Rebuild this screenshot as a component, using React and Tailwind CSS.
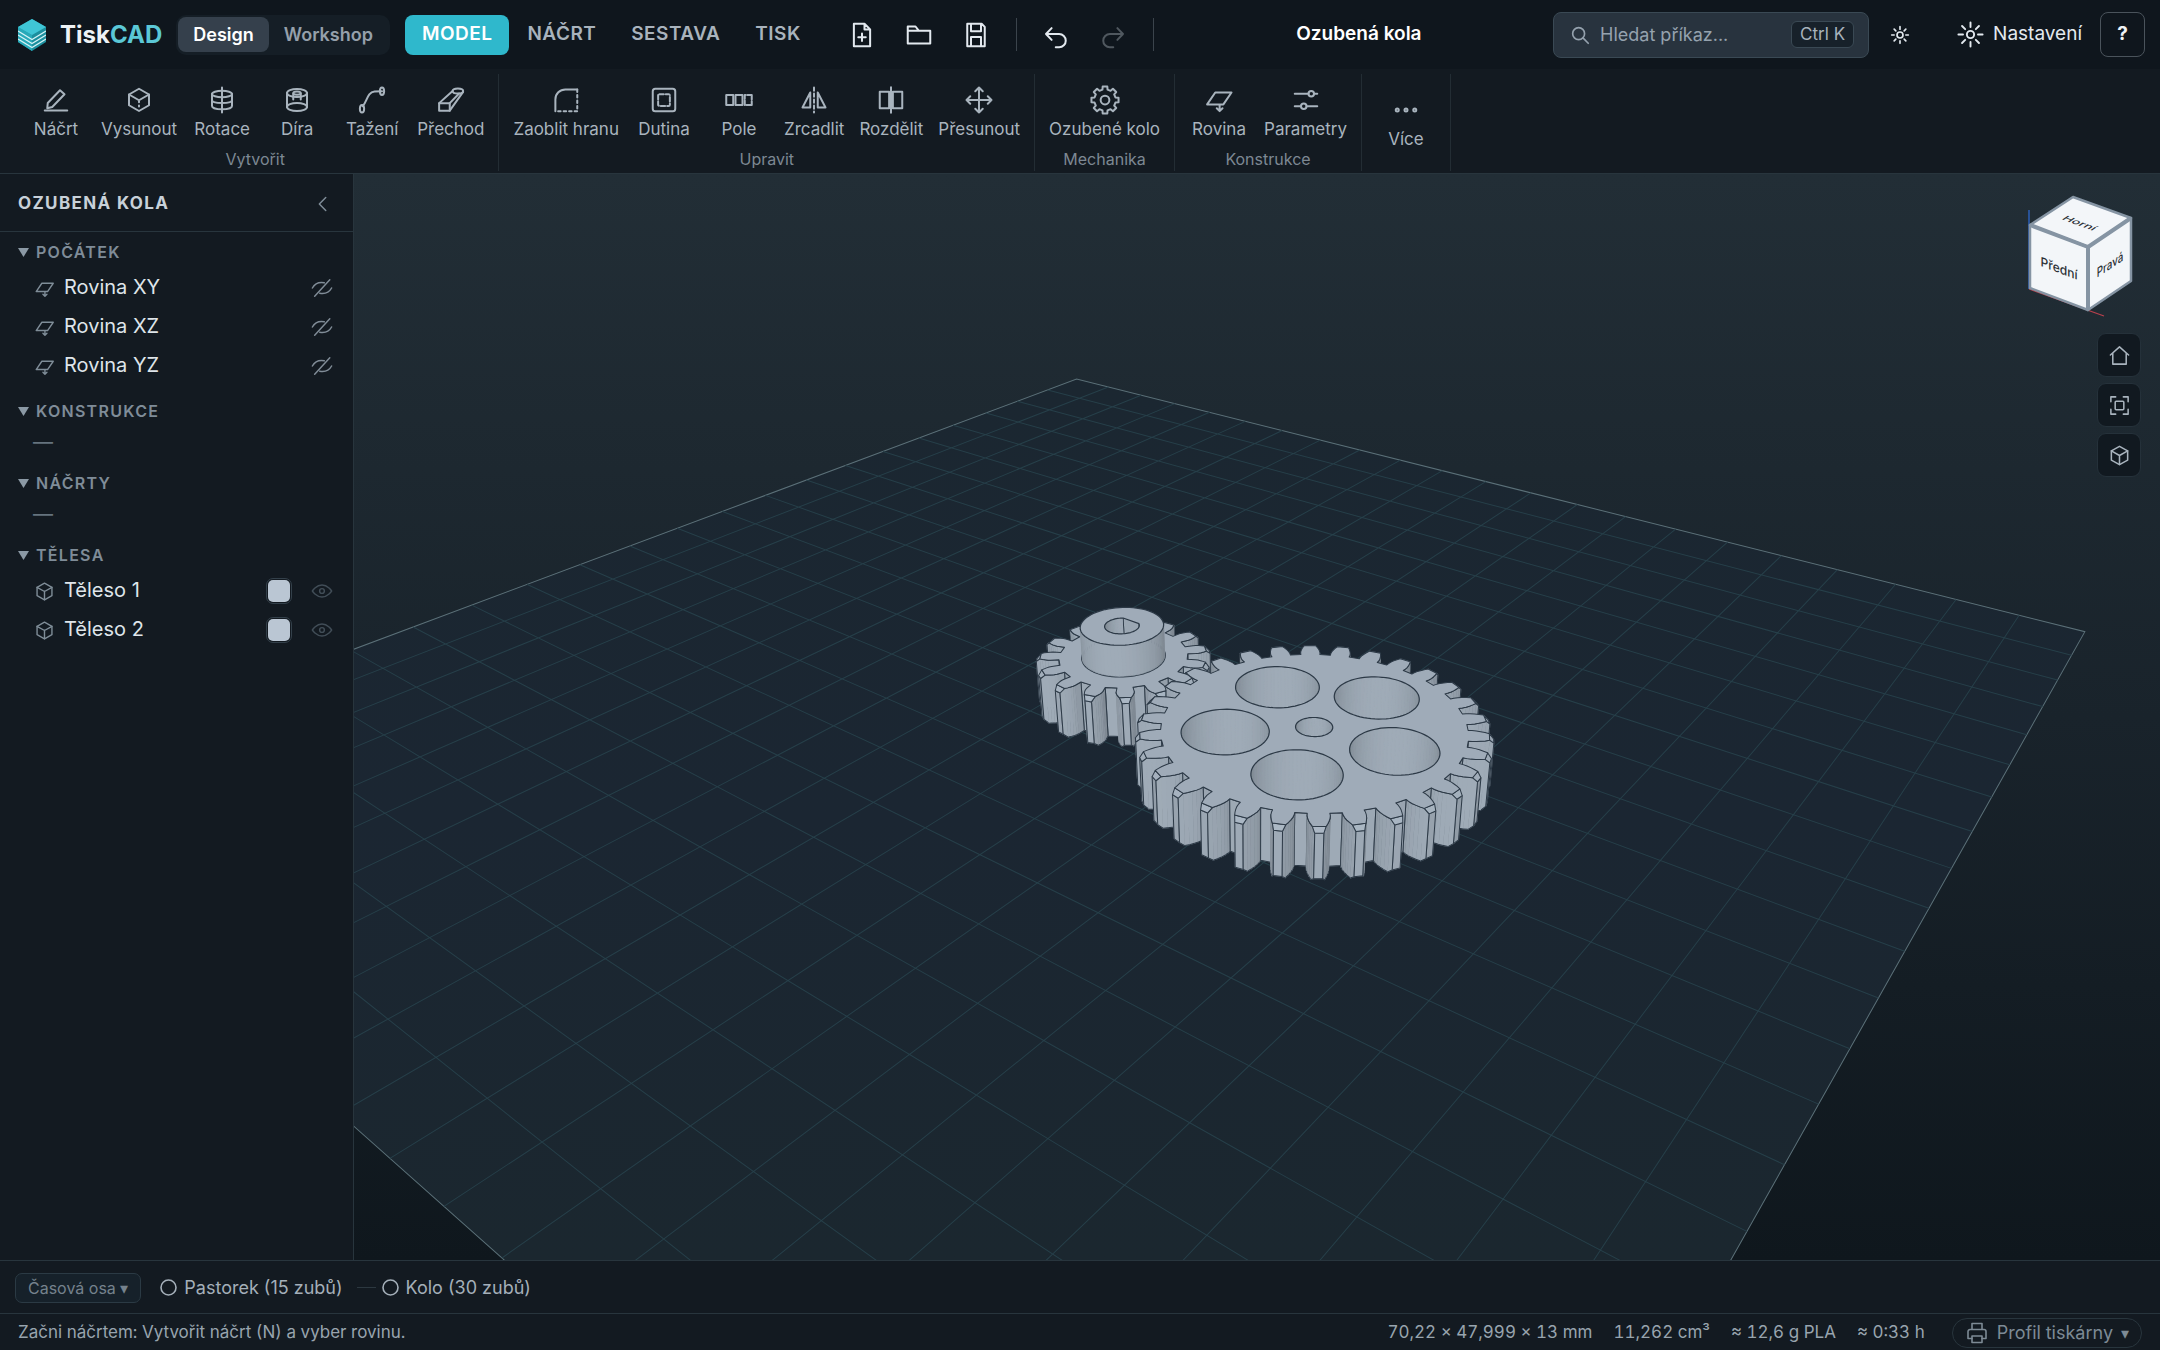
import { useState } from 'react'

/* ---------- 3D scene ---------- */

const VIEW_W = 1805
const VIEW_H = 1086
const FOCAL = VIEW_H / 2 / Math.tan(Math.PI / 9)
const CAM_DIST = 206
const TARGET = [24.5, -0.4, 6.5]
const AZ = Math.asin(0.593)
const EL = (30.6 * Math.PI) / 180

const DIR = [Math.sin(AZ) * Math.cos(EL), -Math.cos(AZ) * Math.cos(EL), Math.sin(EL)]
const RIGHT = [Math.cos(AZ), Math.sin(AZ), 0]
const UP = [-Math.sin(AZ) * Math.sin(EL), Math.cos(AZ) * Math.sin(EL), Math.cos(EL)]
const EYE = TARGET.map((t, i) => t + DIR[i] * CAM_DIST)

const dot = (a, b) => a[0] * b[0] + a[1] * b[1] + a[2] * b[2]
const norm = (v) => {
  const l = Math.hypot(...v)
  return v.map((c) => c / l)
}
const LIGHT = norm(DIR.map((d, i) => d - 0.1 * RIGHT[i] + 0.25 * UP[i]))

const project = (p) => {
  const rel = p.map((c, i) => c - TARGET[i])
  const depth = CAM_DIST - dot(DIR, rel)
  return [VIEW_W / 2 + (FOCAL * dot(RIGHT, rel)) / depth, VIEW_H / 2 - (FOCAL * dot(UP, rel)) / depth, depth]
}

const toPath = (pts, close = true) =>
  'M' + pts.map((p) => project(p).slice(0, 2).map((c) => c.toFixed(1)).join(' ')).join('L') + (close ? 'Z' : '')

const shade = (n) => {
  const k = 0.74 + 0.26 * Math.max(0, dot(norm(n), LIGHT))
  return `rgb(${[172, 185, 198].map((c) => Math.round(c * k)).join(',')})`
}
const facing = (n, p) => dot(n, EYE.map((c, i) => c - p[i])) > 0

const circle = (cx, cy, r, n = 72) =>
  Array.from({ length: n }, (_, i) => {
    const a = (i / n) * 2 * Math.PI
    return { x: cx + r * Math.cos(a), y: cy + r * Math.sin(a) }
  })

const MODULE = 1.5
const HEIGHT = 8
const CHAMFER = 0.6
const PRESSURE = (20 * Math.PI) / 180
const inv = (a) => Math.tan(a) - a

// Closed counter-clockwise outline of an involute spur gear
function gearOutline(teeth, cx, phase) {
  const rp = (MODULE * teeth) / 2
  const ra = rp + MODULE
  const rf = rp - 1.25 * MODULE
  const rb = rp * Math.cos(PRESSURE)
  const half = (r) => Math.PI / (2 * teeth) + inv(PRESSURE) - inv(Math.acos(Math.min(1, rb / Math.max(r, rb))))
  const start = Math.max(rf, rb)
  const radii = [rf]
  for (let i = rf < rb ? 0 : 1; i <= 4; i++) radii.push(start + ((ra - CHAMFER - start) * i) / 4)
  radii.push(ra)
  const pts = []
  const tips = []
  for (let k = 0; k < teeth; k++) {
    const c = phase + (k * 2 * Math.PI) / teeth
    const at = (r, s) => {
      const a = c + s * half(r)
      const tip = r === ra
      return { x: cx + r * Math.cos(a), y: r * Math.sin(a), cut: tip ? CHAMFER : 0, tip, edge: tip || r === rf }
    }
    radii.forEach((r) => pts.push(at(r, -1)))
    ;[...radii].reverse().forEach((r) => pts.push(at(r, 1)))
    tips.push({ c, quad: [at(ra - CHAMFER, -1), at(ra - CHAMFER, 1), at(ra, 1), at(ra, -1)] })
  }
  return { pts, tips }
}

// Visible walls of an extruded outline, inner = true for a hole
function walls(pts, z0, z1, inner = false) {
  const out = []
  pts.forEach((a, i) => {
    const b = pts[(i + 1) % pts.length]
    const s = inner ? -1 : 1
    const n = [s * (b.y - a.y), -s * (b.x - a.x), 0]
    if (!facing(n, [a.x, a.y, z0])) return
    const la = [a.x, a.y, z0 + (a.cut || 0)]
    const lb = [b.x, b.y, z0 + (b.cut || 0)]
    const ha = [a.x, a.y, z1 - (a.cut || 0)]
    const hb = [b.x, b.y, z1 - (b.cut || 0)]
    let lines = ''
    if (!inner) lines += toPath([la, lb], false) + toPath([ha, hb], false)
    if (a.edge) lines += toPath([la, ha], false)
    if (b.edge) lines += toPath([lb, hb], false)
    out.push({ d: toPath([la, lb, hb, ha]), fill: shade(n), lines, depth: project([(a.x + b.x) / 2, (a.y + b.y) / 2, z0])[2] })
  })
  return out
}

const EDGE = '#2c3946'
const TOP_FILL = '#9fabb8'

function Facets({ faces }) {
  return faces.map((f, i) => (
    <g key={i}>
      <path d={f.d} fill={f.fill} stroke={f.fill} strokeWidth={0.6} />
      {f.lines && <path d={f.lines} fill="none" stroke={EDGE} strokeWidth={1} strokeLinecap="round" />}
    </g>
  ))
}

function Hole({ id, pts, z0, z1 }) {
  const d = toPath(pts.map((p) => [p.x, p.y, z1]))
  return (
    <g>
      <clipPath id={id}>
        <path d={d} />
      </clipPath>
      <g clipPath={`url(#${id})`}>
        <path d={d} fill={TOP_FILL} />
        <Facets faces={walls(pts, z0, z1, true)} />
      </g>
      <path d={d} fill="none" stroke={EDGE} strokeWidth={1.2} />
    </g>
  )
}

function Gears() {
  const wheelX = (MODULE * (15 + 30)) / 2
  const phase = Math.PI / 30
  const pinion = gearOutline(15, 0, 0)
  const wheel = gearOutline(30, wheelX, phase)
  const all = [pinion, wheel]

  const sides = all.flatMap((g) => [
    ...walls(g.pts, 0, HEIGHT),
    ...g.tips.map(({ c, quad }) => {
      const q = quad.map((p) => [p.x, p.y, HEIGHT - p.cut])
      const d = toPath(q)
      return { d, fill: shade([Math.cos(c), Math.sin(c), 1.6]), lines: d, depth: project(q[2])[2] - 0.5 }
    }),
  ])
  sides.sort((a, b) => b.depth - a.depth)

  // D-shaped bore with its flat towards the back
  const hub = circle(0, 0, 6)
  const flat = 2
  const flatX = Math.sqrt(2.5 * 2.5 - flat * flat)
  const bore = circle(0, 0, 2.5).filter((p) => p.y < flat)
  const cut = bore.findIndex((p) => p.x < 0 && p.y > 0)
  bore.splice(cut, 0, { x: flatX, y: flat, edge: true }, { x: -flatX, y: flat, edge: true })

  return (
    <g strokeLinejoin="round">
      <Facets faces={sides} />
      {all.map((g, i) => (
        <path key={i} d={toPath(g.pts.filter((p) => !p.tip).map((p) => [p.x, p.y, HEIGHT]))} fill={TOP_FILL} stroke={EDGE} strokeWidth={1} />
      ))}
      {[0, 1, 2, 3, 4].map((i) => {
        const a = phase + (i * 2 * Math.PI) / 5
        return <Hole key={i} id={`web-${i}`} pts={circle(wheelX + 12 * Math.cos(a), 12 * Math.sin(a), 5.9)} z0={0} z1={HEIGHT} />
      })}
      <Hole id="wheel-bore" pts={circle(wheelX, 0, 2.5)} z0={0} z1={HEIGHT} />
      <path d={toPath(hub.map((p) => [p.x, p.y, HEIGHT]))} fill={TOP_FILL} stroke={EDGE} strokeWidth={2.4} />
      <Facets faces={walls(hub, HEIGHT, 13).map((f) => ({ ...f, lines: '' }))} />
      <path d={toPath(hub.map((p) => [p.x, p.y, 13]))} fill={TOP_FILL} stroke={EDGE} strokeWidth={1.2} />
      <Hole id="hub-bore" pts={bore} z0={0} z1={13} />
    </g>
  )
}

function Scene() {
  const lines = []
  for (let i = -100; i <= 100; i += 10) {
    lines.push(toPath([[i, -110, 0], [i, 110, 0]], false), toPath([[-110, i, 0], [110, i, 0]], false))
  }
  return (
    <svg className="absolute inset-0 h-full w-full" viewBox={`0 0 ${VIEW_W} ${VIEW_H}`} preserveAspectRatio="xMidYMid slice" aria-hidden="true">
      <defs>
        <linearGradient id="bed" gradientUnits="userSpaceOnUse" x1="0" y1="200" x2="0" y2="1086">
          <stop offset="0" stopColor="#1b2731" />
          <stop offset="0.5" stopColor="#1b2632" />
          <stop offset="1" stopColor="#1b272f" />
        </linearGradient>
      </defs>
      <path d={toPath([[-110, -110, 0], [110, -110, 0], [110, 110, 0], [-110, 110, 0]])} fill="url(#bed)" stroke="#5b7078" strokeWidth={1} />
      <path d={lines.join('')} fill="none" stroke="#263f49" strokeWidth={1} />
      <Gears />
    </svg>
  )
}

/* ---------- icons ---------- */

function Icon({ children, className = 'size-[30px]', stroke = 1.6 }) {
  return (
    <svg className={className} viewBox="0 0 24 24" fill="none" stroke="currentColor" strokeWidth={stroke} strokeLinecap="round" strokeLinejoin="round" aria-hidden="true">
      {children}
    </svg>
  )
}

const cogPath = (() => {
  const pts = []
  for (let i = 0; i < 8; i++) {
    const c = (i * Math.PI) / 4
    ;[[-0.24, 8.6], [-0.17, 11], [0.17, 11], [0.24, 8.6]].forEach(([o, r]) => {
      pts.push(`${(12 + r * Math.sin(c + o)).toFixed(2)} ${(12 - r * Math.cos(c + o)).toFixed(2)}`)
    })
  }
  return 'M' + pts.join('L') + 'Z'
})()

const icons = {
  sketch: <><path d="M5 18.6l.4-4.2L15.2 4.2l3.6 3.2L9 17.6z" /><path d="M3 20.4h18" /></>,
  extrude: <><path d="M12 3l8 4.6v8.6l-8 4.6-8-4.6V7.6z" /><path d="M4 7.6l8 4.6 8-4.6M12 12.2v1.6M12 16.4v.8" /></>,
  revolve: <><ellipse cx="12" cy="7.2" rx="8" ry="2.6" /><path d="M4 7.2v9.6c0 1.5 3.6 2.6 8 2.6s8-1.1 8-2.6V7.2M4 12c0 1.5 3.6 2.4 8 2.4s8-.9 8-2.4M12 2v20" /></>,
  hole: <><ellipse cx="12" cy="6.4" rx="8" ry="3.2" /><ellipse cx="12" cy="6.4" rx="3" ry="1.3" /><path d="M4 6.4v11.2M20 6.4v11.2M9 7v4.5M15 7v4.5" /><ellipse cx="12" cy="17.6" rx="8" ry="3.2" /></>,
  sweep: <><ellipse cx="4" cy="19" rx="1.7" ry="3" /><ellipse cx="20" cy="5" rx="1.7" ry="3" /><path d="M4.5 17C8 14 8 5.5 14 5.2L20 5" /></>,
  loft: <><rect x="2.5" y="14.5" width="8.5" height="6" /><ellipse cx="17.5" cy="4.8" rx="4.2" ry="2" /><path d="M2.5 14.5L13.3 4.8M11 14.5l7.5-7.7M11 20.5L21.7 5.5" /></>,
  fillet: <><path d="M3.5 21V11.5a8 8 0 018-8H21" /><path d="M21 3.5V21H3.5" strokeDasharray="2 2.4" /></>,
  shell: <><rect x="3" y="3" width="18" height="18" rx="2" /><rect x="7.3" y="7.3" width="9.4" height="9.4" rx="1" strokeDasharray="3.5 1.6" /></>,
  pattern: <><rect x="1.8" y="8" width="5.6" height="8" /><rect x="9.2" y="8" width="5.6" height="8" /><path d="M22.2 8h-5.6v8h5.6M22.2 8v8" strokeDasharray="3.5 1.5" /></>,
  mirror: <><path d="M9 6v12H2.8zM15 6v12h6.2z" /><path d="M12 2v20" strokeDasharray="2.6 2.2" /></>,
  split: <path d="M10.5 5.4H3v13.2h7.5zM13.5 5.4H21v13.2h-7.5zM12 1.8v20.4" />,
  move: <path d="M12 2v20M2 12h20M9 5l3-3 3 3M9 19l3 3 3-3M5 9l-3 3 3 3M19 9l3 3-3 3" />,
  gear: <><path d={cogPath} /><circle cx="12" cy="12" r="3.5" /></>,
  plane: <path d="M9 6h13l-6.5 9.5h-13zM12.5 15.5v5M10.2 18.6l2.3 2.3 2.3-2.3" />,
  sliders: <><path d="M3 7h11M18.5 7H21M3 17h5M12.5 17H21" /><circle cx="16.2" cy="7" r="2.2" /><circle cx="10.2" cy="17" r="2.2" /></>,
  more: <><circle cx="5" cy="12" r="1.2" /><circle cx="12" cy="12" r="1.2" /><circle cx="19" cy="12" r="1.2" /></>,
  file: <path d="M5.5 3H14l4.5 4.5V21h-13zM14 3v4.5h4.5M12 10.8v6M9 13.8h6" />,
  folder: <path d="M3 18.8V5.2h6.2l2.6 3.3H21v10.3zM3 8.5h8.8" />,
  save: <path d="M5 3h11.5L19 5.5V21H5zM8 3v6h8V3M8 21v-7.5h8V21" />,
  undo: <path d="M8.5 6.5L4 11.2l4.5 4.7M4 11.2h10.5a5.3 5.3 0 010 10.6h-2.7" />,
  redo: <path d="M15.5 6.5l4.5 4.7-4.5 4.7M20 11.2H9.5a5.3 5.3 0 000 10.6h2.7" />,
  search: <><circle cx="10.5" cy="10.5" r="6.5" /><path d="M15.5 15.5L21 21" /></>,
  sun: <><circle cx="12" cy="12" r="3.6" /><path d="M12 2v3M12 19v3M2 12h3M19 12h3M5 5l2 2M17 17l2 2M5 19l2-2M17 7l2-2" /></>,
  settings: <><circle cx="12" cy="12" r="3" /><path d="M12 2v3.8M12 18.2V22M2 12h3.8M18.2 12H22M5 5l2.6 2.6M16.4 16.4L19 19M5 19l2.6-2.6M16.4 7.6L19 5" /></>,
  chevron: <path d="M15 5l-7 7 7 7" />,
  cube: <><path d="M12 2.5l8.5 4.7v9.6L12 21.5l-8.5-4.7V7.2z" /><path d="M3.5 7.2L12 12l8.5-4.8M12 12v9.5" /></>,
  eye: <><path d="M1.5 12S5.5 5.5 12 5.5 22.5 12 22.5 12 18.5 18.5 12 18.5 1.5 12 1.5 12z" /><circle cx="12" cy="12" r="2.6" /></>,
  eyeOff: <path d="M1.5 12C4 7.5 9 5.3 14.5 6.3M22.5 12C20 16.5 15 18.7 9.5 17.7M4 21L20.5 3" />,
  home: <path d="M2.5 11.5L12 3l9.5 8.5M5 9.5V21h14V9.5" />,
  fit: <><path d="M3 8V3h5M16 3h5v5M21 16v5h-5M8 21H3v-5" /><rect x="7.5" y="7.5" width="9" height="9" rx="1" /></>,
  printer: <><path d="M7 8.5v-6h10v6M7 17.5H3v-7a2 2 0 012-2h14a2 2 0 012 2v7h-4" /><rect x="7" y="15" width="10" height="6.5" /></>,
}

function Logo() {
  return (
    <svg className="h-8 w-7" viewBox="0 0 28 32" aria-hidden="true">
      <path d="M14 0l14 8v15l-14 9L0 23V8z" fill="#1c8f9e" />
      <path d="M0 8l14 8v16L0 23z" fill="#27a9b9" />
      <path d="M14 0l14 8-14 8L0 8z" fill="#3fc6d6" />
      <path d="M0 12l14 8.5L28 12M0 16l14 8.5L28 16M0 20l14 8.5L28 20" fill="none" stroke="#d5f3f6" strokeWidth="1.2" />
    </svg>
  )
}

/* ---------- chrome ---------- */

const tabs = ['MODEL', 'NÁČRT', 'SESTAVA', 'TISK']

const toolGroups = [
  { label: 'Vytvořit', tools: [['sketch', 'Náčrt'], ['extrude', 'Vysunout'], ['revolve', 'Rotace'], ['hole', 'Díra'], ['sweep', 'Tažení'], ['loft', 'Přechod']] },
  { label: 'Upravit', tools: [['fillet', 'Zaoblit hranu'], ['shell', 'Dutina'], ['pattern', 'Pole'], ['mirror', 'Zrcadlit'], ['split', 'Rozdělit'], ['move', 'Přesunout']] },
  { label: 'Mechanika', tools: [['gear', 'Ozubené kolo']] },
  { label: 'Konstrukce', tools: [['plane', 'Rovina'], ['sliders', 'Parametry']] },
  { label: '', tools: [['more', 'Více']] },
]

function HeaderButton({ icon, label, disabled }) {
  return (
    <button aria-label={label} disabled={disabled} className="flex h-10 w-[57px] items-center justify-center text-[#e3e9ef] disabled:text-[#50585f]">
      <Icon>{icons[icon]}</Icon>
    </button>
  )
}

function Header() {
  const [mode, setMode] = useState('Design')
  const [tab, setTab] = useState('MODEL')
  return (
    <header className="flex h-[69px] items-center bg-[#0f161d] pr-[15px] pl-[18px]">
      <Logo />
      <div className="ml-[14px] text-2xl font-bold text-[#eef2f5]">
        Tisk<span className="text-[#5bc8d6]">CAD</span>
      </div>
      <div className="ml-[14px] flex h-10 items-center rounded-[10px] bg-[#151e26] px-[2px]">
        {['Design', 'Workshop'].map((m) => (
          <button key={m} onClick={() => setMode(m)} className={`h-[35px] rounded-lg px-[15px] text-[18px] font-semibold ${mode === m ? 'bg-[#35404c] text-white' : 'text-[#95a0ab]'}`}>
            {m}
          </button>
        ))}
      </div>
      <nav className="ml-[15px] flex items-center gap-px">
        {tabs.map((t) => (
          <button key={t} onClick={() => setTab(t)} className={`h-10 rounded-lg px-[17px] text-[19px] font-semibold tracking-wide ${tab === t ? 'bg-[#2fb8cc] text-white' : 'text-[#a9b3bd]'}`}>
            {t}
          </button>
        ))}
      </nav>
      <div className="ml-4 flex items-center">
        <HeaderButton icon="file" label="Nový" />
        <HeaderButton icon="folder" label="Otevřít" />
        <HeaderButton icon="save" label="Uložit" />
        <span className="mx-[11px] h-[33px] w-px bg-[#3b444c]" />
        <HeaderButton icon="undo" label="Zpět" />
        <HeaderButton icon="redo" label="Znovu" disabled />
        <span className="mx-[11px] h-[33px] w-px bg-[#3b444c]" />
      </div>
      <h1 className="flex-1 text-center text-[19px] font-semibold text-white">Ozubená kola</h1>
      <label className="flex h-[46px] w-[316px] items-center rounded-lg border border-[#3a4954] bg-[#28333e] pr-[14px] pl-[15px] text-[#95a2ae]">
        <Icon className="size-[22px]" stroke={1.8}>{icons.search}</Icon>
        <input type="text" aria-label="Hledat příkaz" placeholder="Hledat příkaz..." className="ml-[9px] min-w-0 flex-1 bg-transparent text-[18px] outline-none placeholder:text-[#95a2ae]" />
        <kbd className="rounded-md border border-[#3a4954] bg-[#17212a] px-2 font-[Inter,sans-serif] text-[17px] leading-[25px] text-[#a7b2bc]">Ctrl K</kbd>
      </label>
      <button aria-label="Světlý režim" className="ml-[21px] text-[#e3e9ef]">
        <Icon className="size-[20px]" stroke={2}>{icons.sun}</Icon>
      </button>
      <button className="ml-[46px] flex items-center gap-2 text-[19px] text-[#e3e9ef]">
        <Icon className="size-[29px]">{icons.settings}</Icon>
        Nastavení
      </button>
      <button aria-label="Nápověda" className="ml-[18px] h-[45px] w-[45px] rounded-lg border border-[#4a535b] text-[19px] font-bold text-[#eef2f5]">
        ?
      </button>
    </header>
  )
}

function Toolbar() {
  return (
    <div className="flex h-[105px] items-stretch border-b border-[#28353d] bg-[#131a21] pt-[5px] pb-[2px] pl-3">
      {toolGroups.map((g, i) => (
        <div key={i} className={`flex flex-col items-center border-r border-[#232d34] px-2 ${g.label ? 'pt-[11px]' : 'justify-center'}`}>
          <div className="flex gap-[3px]">
            {g.tools.map(([icon, label]) => (
              <button key={label} className="flex min-w-[72px] flex-col items-center gap-[2px] px-[6px] text-[17px] leading-[24px] text-[#a9b4be]">
                <Icon>{icons[icon]}</Icon>
                {label}
              </button>
            ))}
          </div>
          {g.label && <div className="mt-[8px] text-[16px] leading-[20px] text-[#7d8893]">{g.label}</div>}
        </div>
      ))}
    </div>
  )
}

function Section({ title, children }) {
  return (
    <section className="pb-[6px]">
      <h3 className="flex h-9 items-center gap-[7px] pt-[4px] pl-[18px] text-[16px] font-semibold tracking-[.08em] text-[#7f8c98]">
        <svg className="h-[9px] w-[11px]" viewBox="0 0 11 9" aria-hidden="true"><path d="M0 0h11L5.5 9z" fill="#8b99a5" /></svg>
        {title}
      </h3>
      {children}
    </section>
  )
}

function Row({ icon, name, swatch, visible }) {
  return (
    <div className="flex h-[39px] items-center pt-px pr-5 pl-[34px]">
      <Icon className="size-[21px] text-[#7f8d98]">{icons[icon]}</Icon>
      <span className="ml-[9px] flex-1 pb-[2px] text-[20px] leading-[26px] text-[#dfe5ea]">{name}</span>
      {swatch && (
        <button aria-label={`Barva ${name}`} className="mr-[19px] flex size-[26px] items-center justify-center rounded-[7px] border border-[#33404a]">
          <span className="size-[22px] rounded-[5px] bg-[#bac6d3]" />
        </button>
      )}
      <button aria-label={`Viditelnost ${name}`} className={visible ? 'text-[#414d57]' : 'text-[#808c97]'}>
        <Icon className="size-[22px]">{icons[visible ? 'eye' : 'eyeOff']}</Icon>
      </button>
    </div>
  )
}

const Empty = () => <div className="h-[30px] pl-[33px] text-[20px] leading-[30px] text-[#65737e]">—</div>

function Sidebar() {
  return (
    <aside className="w-[354px] shrink-0 border-r border-[#28353d] bg-[#131a21]">
      <div className="flex h-[58px] items-center justify-between border-b border-[#28353d] pt-[2px] pr-[19px] pl-[18px]">
        <h2 className="text-[17px] font-bold tracking-[.08em] text-[#c8d1d9]">OZUBENÁ KOLA</h2>
        <button aria-label="Sbalit panel" className="text-[#7f8d98]"><Icon className="size-[22px]">{icons.chevron}</Icon></button>
      </div>
      <Section title="POČÁTEK">
        {['Rovina XY', 'Rovina XZ', 'Rovina YZ'].map((n) => <Row key={n} icon="plane" name={n} />)}
      </Section>
      <Section title="KONSTRUKCE"><Empty /></Section>
      <Section title="NÁČRTY"><Empty /></Section>
      <Section title="TĚLESA">
        {['Těleso 1', 'Těleso 2'].map((n) => <Row key={n} icon="cube" name={n} swatch visible />)}
      </Section>
    </aside>
  )
}

function ViewCube() {
  return (
    <svg className="h-[130px] w-[117px]" viewBox="0 0 117 130" role="img" aria-label="Orientace pohledu">
      <path d="M5 20v79" stroke="#2b5fb8" strokeWidth="1.5" />
      <path d="M5 99l75 27" stroke="#b8404d" strokeWidth="1.2" />
      <g fill="#f3f6f9" stroke="#8594a3" strokeWidth="2.5" strokeLinejoin="round">
        <path d="M6 35L49 7l58 21-43 29z" />
        <path d="M6 35l58 22v63L6 98z" />
        <path d="M64 57l43-29v63l-43 29z" />
      </g>
      <path d="M6 35l58 22 43-29M64 57v63" fill="none" stroke="#8594a3" strokeWidth="4" strokeLinejoin="round" />
      <g fontFamily="Inter, sans-serif" fontSize="13" fontWeight="500" fill="#2b3036" textAnchor="middle">
        <text transform="matrix(.93 .35 0 1 35 83)">Přední</text>
        <text transform="matrix(.75 -.5 0 1 86 79)">Pravá</text>
        <text transform="matrix(.93 .34 -.6 .42 53 35)">Horní</text>
      </g>
    </svg>
  )
}

function Viewport() {
  return (
    <main className="relative min-w-0 flex-1 overflow-hidden bg-linear-to-b from-[#222e36] via-[#19232b] to-[#0f171d]">
      <Scene />
      <div className="absolute top-4 right-[19px] flex flex-col items-end gap-[6px]">
        <ViewCube />
        <div className="mt-[7px] flex flex-col gap-[6px]">
          {[['home', 'Výchozí pohled'], ['fit', 'Přizpůsobit'], ['cube', 'Zobrazení']].map(([icon, label]) => (
            <button key={icon} aria-label={label} className="flex size-[44px] items-center justify-center rounded-[9px] border border-[#25313a] bg-[#111920] text-[#a9b4be]">
              <Icon className="size-[23px]">{icons[icon]}</Icon>
            </button>
          ))}
        </div>
      </div>
    </main>
  )
}

function Step({ children }) {
  return (
    <button className="flex items-center gap-[7px]">
      <svg className="size-[17px]" viewBox="0 0 17 17" aria-hidden="true"><circle cx="8.5" cy="8.5" r="7.5" fill="none" stroke="currentColor" strokeWidth="1.6" /></svg>
      {children}
    </button>
  )
}

function Timeline() {
  return (
    <div className="flex h-[53px] items-center border-t border-[#28353d] bg-[#131a21] pt-px pl-[15px] text-[18px] text-[#a4afb9]">
      <button className="mr-[19px] h-[30px] rounded-[7px] border border-[#2b3a44] bg-[#16212a] px-3 text-[16px] text-[#75828d]">Časová osa ▾</button>
      <Step>Pastorek (15 zubů)</Step>
      <span className="mr-[6px] ml-[14px] h-px w-[19px] bg-[#2c3840]" />
      <Step>Kolo (30 zubů)</Step>
    </div>
  )
}

function StatusBar() {
  return (
    <footer className="flex h-[37px] items-center gap-[21px] border-t border-[#28353d] bg-[#131a21] pt-px pr-[18px] pl-[18px] text-[17px] text-[#98a4ae] tabular-nums">
      <span className="flex-1">Začni náčrtem: Vytvořit náčrt (N) a vyber rovinu.</span>
      <span>70,22 × 47,999 × 13 mm</span>
      <span>11,262 cm³</span>
      <span>≈ 12,6 g PLA</span>
      <span>≈ 0:33 h</span>
      <button className="ml-[6px] flex h-[30px] items-center gap-2 rounded-full border border-[#28353d] px-3 text-[18px] text-[#7d8a95]">
        <Icon className="size-[24px]">{icons.printer}</Icon>
        <span>Profil tiskárny</span>
        <span className="text-[16px]">▾</span>
      </button>
    </footer>
  )
}

export default function App() {
  return (
    <div className="flex h-screen flex-col bg-[#131a21] font-[Inter,sans-serif]">
      <Header />
      <Toolbar />
      <div className="flex min-h-0 flex-1">
        <Sidebar />
        <Viewport />
      </div>
      <Timeline />
      <StatusBar />
    </div>
  )
}
